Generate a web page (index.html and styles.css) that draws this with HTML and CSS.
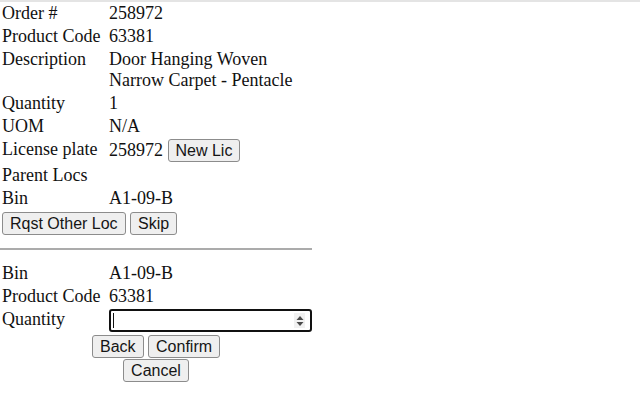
FILE: index.html
```html
<!DOCTYPE html>
<html>
<head>
<meta charset="utf-8">
<title>Pick</title>
<link rel="stylesheet" href="styles.css">
</head>
<body>
<div class="page">
  <div class="panel">
    <table class="info">
      <colgroup><col class="c1"><col class="c2"></colgroup>
      <tr><td>Order #</td><td>258972</td></tr>
      <tr><td>Product Code</td><td>63381</td></tr>
      <tr><td>Description</td><td>Door Hanging Woven Narrow Carpet - Pentacle</td></tr>
      <tr><td>Quantity</td><td>1</td></tr>
      <tr><td>UOM</td><td>N/A</td></tr>
      <tr class="lic"><td>License plate</td><td>258972 <button class="btn">New Lic</button></td></tr>
      <tr><td colspan="2">Parent Locs</td></tr>
      <tr><td>Bin</td><td>A1-09-B</td></tr>
      <tr><td colspan="2" class="btnrow"><button class="btn">Rqst Other Loc</button> <button class="btn">Skip</button></td></tr>
    </table>
    <hr class="sep">
    <table class="info second">
      <colgroup><col class="c1"><col class="c2"></colgroup>
      <tr><td>Bin</td><td>A1-09-B</td></tr>
      <tr><td>Product Code</td><td>63381</td></tr>
      <tr><td>Quantity</td><td>
        <div class="numbox">
          <span class="caret"></span>
          <span class="spin"><svg width="8" height="12" viewBox="0 0 8 12"><path d="M4 1 L7.5 5 L0.5 5 Z" fill="#4a4a4a"/><path d="M4 11 L7.5 7 L0.5 7 Z" fill="#4a4a4a"/></svg></span>
        </div>
      </td></tr>
      <tr><td colspan="2" class="actions">
        <div class="actline"><button class="btn">Back</button> <button class="btn">Confirm</button></div>
        <div class="actline"><button class="btn">Cancel</button></div>
      </td></tr>
    </table>
  </div>
</div>
</body>
</html>
```

FILE: styles.css
```css
html, body {
  margin: 0;
  padding: 0;
  background: #ffffff;
}
body {
  font-family: "Liberation Serif", "Times New Roman", serif;
  font-size: 18px;
  color: #111111;
}
.page {
  border-top: 2px solid #e4e4e4;
}
.panel {
  width: 312px;
}
.info {
  border-collapse: separate;
  border-spacing: 0;
  width: 312px;
  table-layout: fixed;
}
.c1 {
  width: 107px;
}
.c2 {
  width: 205px;
}
.info td {
  padding: 1px 2px;
  vertical-align: top;
  line-height: 21px;
}
.lic td {
  padding-bottom: 2px;
}
.btn {
  font-family: "Liberation Sans", Arial, sans-serif;
  font-size: 16px;
  line-height: 19px;
  padding: 1px 7px;
  margin: 0;
  border: 1px solid #8c8c8c;
  border-radius: 3px;
  background: #efefef;
  color: #151515;
}
.info td.btnrow {
  padding-top: 2px;
}
.sep {
  margin: 12px 0 0 0;
  height: 0;
  border: 0;
  border-top: 2px solid #ababab;
}
.second {
  margin-top: 12px;
}
.numbox {
  box-sizing: border-box;
  width: 203px;
  height: 23px;
  border: 2px solid #111111;
  border-radius: 3px;
  display: flex;
  align-items: center;
  justify-content: space-between;
  padding: 0 5px 0 2px;
}
.caret {
  width: 1px;
  height: 15px;
  background: #111111;
}
.spin {
  width: 11px;
  height: 15px;
  background: #f1f1f1;
  display: flex;
  align-items: center;
  justify-content: center;
}
.spin svg {
  display: block;
}
.info td.actions {
  text-align: center;
  padding-top: 2px;
}
.actline {
  height: 24px;
}
```
